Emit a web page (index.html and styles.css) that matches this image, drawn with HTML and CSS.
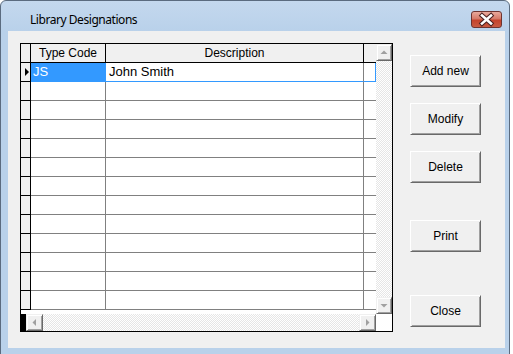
FILE: index.html
```html
<!DOCTYPE html>
<html>
<head>
<meta charset="utf-8">
<link rel="stylesheet" href="styles.css">
</head>
<body>
<div class="window">
  <div class="titlebar">
    <span class="title">Library Designations</span>
    <div class="close-btn">
      <svg width="31" height="17" viewBox="0 0 31 17">
        <path d="M11 4.5 L20 12.5 M20 4.5 L11 12.5" stroke="#4a2020" stroke-width="4.6" stroke-linecap="square" fill="none"/>
        <path d="M11 4.5 L20 12.5 M20 4.5 L11 12.5" stroke="#ffffff" stroke-width="2.6" stroke-linecap="square" fill="none"/>
      </svg>
    </div>
  </div>
  <div class="client">
    <div class="grid">
      <div class="grid-main">
        <div class="grid-body">
          <div class="row header">
            <div class="sel"></div>
            <div class="cell c1">Type Code</div>
            <div class="cell c2">Description</div>
            <div class="cell c3"></div>
          </div>
          <div class="row current">
            <div class="sel"><svg width="9" height="18" viewBox="0 0 9 18"><path d="M4 5 L8 9 L4 13 Z" fill="#000"/></svg></div>
            <div class="cell c1">JS</div>
            <div class="cell c2">John Smith</div>
            <div class="cell c3"></div>
          </div>
          <div class="row"><div class="sel"></div><div class="cell c1"></div><div class="cell c2"></div><div class="cell c3"></div></div>
          <div class="row"><div class="sel"></div><div class="cell c1"></div><div class="cell c2"></div><div class="cell c3"></div></div>
          <div class="row"><div class="sel"></div><div class="cell c1"></div><div class="cell c2"></div><div class="cell c3"></div></div>
          <div class="row"><div class="sel"></div><div class="cell c1"></div><div class="cell c2"></div><div class="cell c3"></div></div>
          <div class="row"><div class="sel"></div><div class="cell c1"></div><div class="cell c2"></div><div class="cell c3"></div></div>
          <div class="row"><div class="sel"></div><div class="cell c1"></div><div class="cell c2"></div><div class="cell c3"></div></div>
          <div class="row"><div class="sel"></div><div class="cell c1"></div><div class="cell c2"></div><div class="cell c3"></div></div>
          <div class="row"><div class="sel"></div><div class="cell c1"></div><div class="cell c2"></div><div class="cell c3"></div></div>
          <div class="row"><div class="sel"></div><div class="cell c1"></div><div class="cell c2"></div><div class="cell c3"></div></div>
          <div class="row"><div class="sel"></div><div class="cell c1"></div><div class="cell c2"></div><div class="cell c3"></div></div>
          <div class="row"><div class="sel"></div><div class="cell c1"></div><div class="cell c2"></div><div class="cell c3"></div></div>
          <div class="row"><div class="sel"></div><div class="cell c1"></div><div class="cell c2"></div><div class="cell c3"></div></div>
        </div>
        <div class="vscroll">
          <div class="sbtn vbtn"><svg width="14" height="15" viewBox="0 0 14 15"><path d="M3.5 9 L7 5.5 L10.5 9 Z" fill="#a0a0a0"/></svg></div>
          <div class="track"></div>
          <div class="sbtn vbtn"><svg width="14" height="15" viewBox="0 0 14 15"><path d="M3.5 6 L7 9.5 L10.5 6 Z" fill="#a0a0a0"/></svg></div>
        </div>
      </div>
      <div class="hscroll">
        <div class="hblock"></div>
        <div class="sbtn hbtn"><svg width="15" height="15" viewBox="0 0 15 15"><path d="M9 4 L5.5 7.5 L9 11 Z" fill="#a0a0a0"/></svg></div>
        <div class="track"></div>
        <div class="sbtn hbtn"><svg width="15" height="15" viewBox="0 0 15 15"><path d="M6 4 L9.5 7.5 L6 11 Z" fill="#a0a0a0"/></svg></div>
        <div class="corner"></div>
      </div>
    </div>
    <div class="buttons">
      <div class="btn b-add">Add new</div>
      <div class="btn b-mod">Modify</div>
      <div class="btn b-del">Delete</div>
      <div class="btn b-print">Print</div>
      <div class="btn b-close">Close</div>
    </div>
  </div>
</div>
</body>
</html>
```

FILE: styles.css
```css
html, body {
  margin: 0;
  padding: 0;
  background: #ffffff;
}
body {
  width: 513px;
  height: 354px;
  overflow: hidden;
}
.window {
  box-sizing: border-box;
  width: 510px;
  height: 360px;
  border: 1px solid #5b6b7f;
  border-radius: 6px 6px 0 0;
  background: linear-gradient(#c4d8ee 0, #b9d1ea 30px, #b9d1ea 100%);
  display: flex;
  flex-direction: column;
}
.titlebar {
  height: 30px;
  display: flex;
  align-items: flex-start;
  flex-shrink: 0;
}
.title {
  font-family: "Noto Sans", "Open Sans", sans-serif;
  font-size: 12px;
  letter-spacing: -0.45px;
  color: #000;
  margin-left: 29px;
  margin-top: 10px;
  line-height: 17px;
}
.close-btn {
  margin-left: auto;
  margin-right: 7px;
  margin-top: 10px;
  width: 31px;
  height: 17px;
  box-sizing: border-box;
  border: 1px solid #6e3430;
  border-radius: 3px;
  background: linear-gradient(#e9a99c 0, #d67a68 45%, #c4432c 55%, #c85a42 100%);
  display: flex;
  align-items: center;
  justify-content: center;
  overflow: hidden;
}
.close-btn svg {
  display: block;
  flex-shrink: 0;
}
.client {
  margin: 0 4px 0 7px;
  height: 317px;
  background: #f0f0f0;
  display: flex;
  padding: 12px 0 0 12px;
  box-sizing: border-box;
  flex-shrink: 0;
}
.grid {
  width: 373px;
  height: 289px;
  box-sizing: border-box;
  border: 1px solid #000;
  display: flex;
  flex-direction: column;
  background: #fff;
}
.grid-main {
  display: flex;
  height: 270px;
}
.grid-body {
  width: 355px;
  height: 270px;
  overflow: hidden;
  background: #fff;
}
.row {
  display: flex;
  height: 19px;
}
.sel {
  width: 9px;
  height: 18px;
  background: #f0f0f0;
  border-right: 1px solid #000;
  border-bottom: 1px solid #000;
  flex-shrink: 0;
}
.sel svg {
  display: block;
}
.cell {
  height: 18px;
  border-bottom: 1px solid #808080;
  font-family: "Liberation Sans", Arial, sans-serif;
  font-size: 13px;
  line-height: 18px;
  color: #000;
  white-space: nowrap;
  overflow: hidden;
  flex-shrink: 0;
}
.c1 {
  border-right: 1px solid #808080;
  padding-left: 2px;
  width: 72px;
}
.c2 {
  width: 254px;
  padding-left: 3px;
  border-right: 1px solid #808080;
}
.c3 {
  width: 12px;
}
.header .cell {
  background: #f0f0f0;
  border-bottom-color: #000;
  font-size: 12px;
  text-align: center;
  padding-left: 0;
}
.header .c1 {
  width: 74px;
  border-right-color: #000;
}
.header .c2 {
  width: 257px;
  border-right-color: #000;
}
.current .c1 {
  background: #3399ff;
  color: #fff;
  border-bottom-color: #3399ff;
  border-right-color: #3399ff;
}
.current .c2 {
  border-bottom-color: #3399ff;
}
.current .c3 {
  border-bottom-color: #3399ff;
  box-shadow: inset -1px 0 0 #3399ff;
}
.vscroll {
  width: 16px;
  height: 270px;
  display: flex;
  flex-direction: column;
}
.track {
  flex: 1;
  background-image: repeating-conic-gradient(#ffffff 0 25%, #e6e6e6 0 50%);
  background-size: 2px 2px;
}
.sbtn {
  box-sizing: border-box;
  background: #f0f0f0;
  border: 1px solid;
  border-color: #f0f0f0 #696969 #696969 #f0f0f0;
  box-shadow: inset 1px 1px 0 #ffffff, inset -1px -1px 0 #a0a0a0;
  display: flex;
  align-items: center;
  justify-content: center;
  flex-shrink: 0;
}
.sbtn svg {
  display: block;
}
.vbtn {
  width: 16px;
  height: 17px;
}
.hscroll {
  display: flex;
  height: 17px;
}
.hblock {
  width: 5px;
  background: #000;
}
.hbtn {
  width: 17px;
  height: 17px;
}
.corner {
  width: 16px;
  background: #fff;
}
.buttons {
  display: flex;
  flex-direction: column;
  margin-left: 17px;
  padding-top: 12px;
}
.btn {
  width: 71px;
  height: 32px;
  box-sizing: border-box;
  background: #f0f0f0;
  border: 1px solid;
  border-color: #ffffff #696969 #696969 #ffffff;
  box-shadow: inset 1px 1px 0 #f0f0f0, inset -1px -1px 0 #a0a0a0;
  font-family: "Liberation Sans", Arial, sans-serif;
  font-size: 12px;
  color: #000;
  display: flex;
  align-items: center;
  justify-content: center;
}
.b-mod, .b-del {
  margin-top: 16px;
}
.b-print {
  margin-top: 37px;
}
.b-close {
  margin-top: 43px;
}
```
